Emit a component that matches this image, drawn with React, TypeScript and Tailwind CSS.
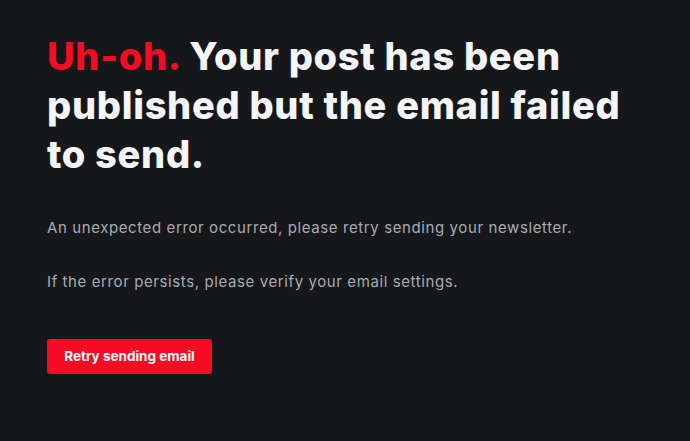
import React from "react";

export default function App() {
  return (
    <div className="min-h-[441px] w-full bg-[#15171a] font-['Inter',sans-serif] px-[47px] pt-[32px]">
      <h1 className="text-[38px] leading-[49px] font-extrabold tracking-[0.7px] text-[#f4f5f6] max-w-[600px]">
        <span className="text-[#f50b23]">Uh-oh.</span> Your post has been published but the email failed to send.
      </h1>
      <p className="mt-[38px] text-[15px] leading-[22px] tracking-[0.6px] text-[#a8acb2]">
        An unexpected error occurred, please retry sending your newsletter.
      </p>
      <p className="mt-[32px] text-[15px] leading-[22px] tracking-[0.6px] text-[#a8acb2]">
        If the error persists, please verify your email settings.
      </p>
      <button className="mt-[46px] h-[35px] w-[165px] rounded-[3px] bg-[#f50b23] text-white text-[13.5px] font-bold">
        Retry sending email
      </button>
    </div>
  );
}
